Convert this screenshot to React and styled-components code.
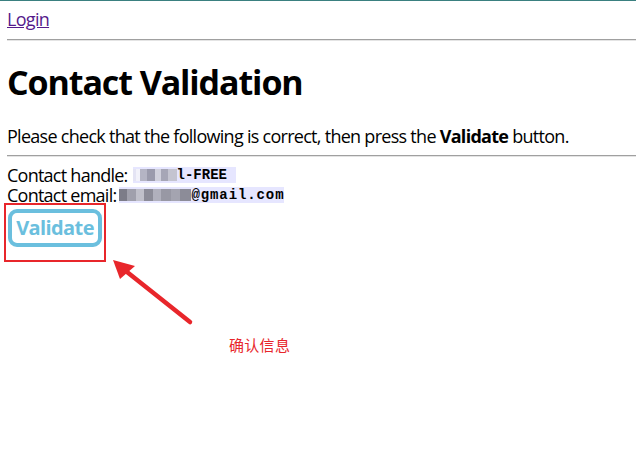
import React from 'react'
import styled, { createGlobalStyle } from 'styled-components'

const GlobalStyle = createGlobalStyle`
    html, body {
        margin: 0;
        padding: 0;
        background: #fff;
    }
    body {
        font-family: "Open Sans", "Noto Sans", sans-serif;
        color: #000;
    }
`;

const Page = styled.div`
    position: relative;
    width: 636px;
    height: 469px;
    box-sizing: border-box;
    border-top: 1px solid #3a8080;
    padding: 0 0 0 7px;
    overflow: hidden;
`;
const Nav = styled.div`
    padding-top: 6px;
    line-height: 24px;
`;
const NavLink = styled.a`
    font-size: 18px;
    color: #551a8b;
    text-decoration: underline;
    letter-spacing: -0.7px;
`;
const Rule = styled.hr`
    margin: 7px 0 0 0;
    border: none;
    border-top: 1px solid #a0a0a0;
    border-bottom: 1px solid #e4e4e4;
    height: 0;
`;
const Title = styled.h1`
    margin: 19px 0 0 0;
    font-size: 34px;
    font-weight: 700;
    line-height: 44px;
    letter-spacing: -1.1px;
`;
const Intro = styled.p`
    margin: 20px 0 0 0;
    font-size: 18px;
    line-height: 24px;
    letter-spacing: -0.72px;
`;
const Details = styled.div`
    margin-top: 8px;
    font-size: 18px;
    line-height: 20px;
    letter-spacing: -0.75px;
`;
const Field = styled.div`
    display: flex;
    align-items: center;
    height: 20px;
`;
const Code = styled.code`
    display: inline-flex;
    align-items: center;
    margin-left: ${(p) => p.$ml || 5}px;
    padding: 0 ${(p) => p.$pr || 0}px 0 0;
    height: 16px;
    background: #e6e6ff;
    font-family: "Liberation Mono", "DejaVu Sans Mono", monospace;
    font-weight: 700;
    font-size: 14px;
    letter-spacing: ${(p) => p.$ls || 0}px;
`;
const Blur = styled.span`
    display: inline-block;
    width: ${(p) => p.$w}px;
    height: 12px;
    background: ${(p) => p.$c};
`;
const ButtonRow = styled.div`
    padding: 4px 0 0 1px;
`;
const ValidateButton = styled.button`
    width: 94px;
    height: 38px;
    box-sizing: border-box;
    border: 4px solid #6bbfde;
    border-radius: 9px;
    background: #fff;
    color: #6bbfde;
    font-family: "Open Sans", sans-serif;
    font-weight: 700;
    font-size: 20px;
    letter-spacing: -0.6px;
    padding: 0 0 1px 0;
    cursor: pointer;
`;
const Highlight = styled.div`
    position: absolute;
    left: 4px;
    top: 202px;
    width: 102px;
    height: 59px;
    box-sizing: border-box;
    border: 2px solid #e8262b;
`;
const Arrow = styled.svg`
    position: absolute;
    left: 100px;
    top: 250px;
`;
const Note = styled.div`
    position: absolute;
    left: 229px;
    top: 333px;
    font-family: "Noto Sans CJK SC", sans-serif;
    font-size: 15px;
    color: #e8262b;
    letter-spacing: 0.3px;
`;

const handleBlur = [
    ['#e4e4f4', 3], ['#f2f2fa', 4], ['#b4b4c4', 7], ['#9a9aac', 8], ['#d0d0dc', 6], ['#a6a6b6', 7], ['#c4c4d0', 9]
];
const emailBlur = [
    ['#7c7c88', 8], ['#a0a0ac', 9], ['#c0c0ca', 8], ['#8c8c98', 9], ['#b0b0bc', 8], ['#9898a4', 10], ['#a4a4b0', 9], ['#8c8c98', 11]
];

function App() {
    return (
        <>
            <GlobalStyle />
            <Page>
                <Nav>
                    <NavLink href="#">Login</NavLink>
                </Nav>
                <Rule />
                <Title>Contact Validation</Title>
                <Intro>
                    Please check that the following is correct, then press the <b>Validate</b> button.
                </Intro>
                <Rule />
                <Details>
                    <Field>
                        Contact handle:
                        <Code $pr={9}>
                            {handleBlur.map(([c, w], i) => <Blur key={i} $c={c} $w={w} />)}
                            l-FREE
                        </Code>
                    </Field>
                    <Field>
                        Contact email:
                        <Code $ml={3} $ls={0.9}>
                            {emailBlur.map(([c, w], i) => <Blur key={i} $c={c} $w={w} />)}
                            @gmail.com
                        </Code>
                    </Field>
                </Details>
                <ButtonRow>
                    <ValidateButton>Validate</ValidateButton>
                </ButtonRow>
                <Highlight />
                <Arrow width="100" height="80" viewBox="0 0 100 80">
                    <line x1="90" y1="71" x2="22" y2="17" stroke="#e8262b" strokeWidth="4.5" strokeLinecap="round" />
                    <polygon points="13,9 35,15 20,28" fill="#e8262b" />
                </Arrow>
                <Note>确认信息</Note>
            </Page>
        </>
    )
}

export default App
